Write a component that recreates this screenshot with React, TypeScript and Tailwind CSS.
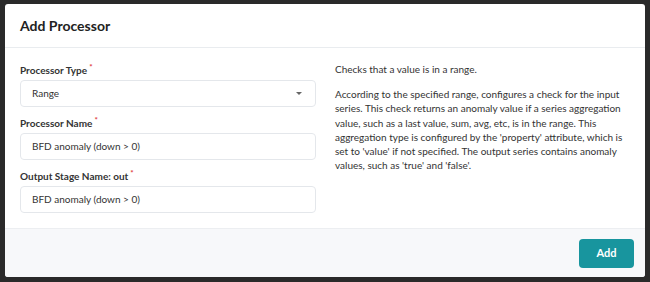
export default function App() {
  return (
    <div className="h-[282px] w-[650px] bg-[#2a2a2a] pt-[4px] pl-[5px] pr-[5px] pb-[5px]" style={{ fontFamily: "Lato, 'Liberation Sans', sans-serif" }}>
      <div className="flex h-full flex-col overflow-hidden rounded-[3px] bg-white text-[#333]">
        <div className="flex h-[44px] shrink-0 items-center border-b border-[#e9ecef] px-[15px]">
          <h2 className="text-[14px] font-bold text-[#222]">Add Processor</h2>
        </div>
        <div className="flex flex-1 gap-[19px] px-[15px] pt-[14px]">
          <div className="w-[296px] shrink-0">
            <Label text="Processor Type" />
            <div className="mt-[2px] mb-[8px] flex h-[27px] items-center justify-between rounded-[4px] border border-[#e4e7eb] pl-[11px] pr-[13px] text-[10px]">
              <span>Range</span>
              <svg width="6" height="3" viewBox="0 0 6 3"><path d="M0 0h6L3 3z" fill="#666" /></svg>
            </div>
            <Label text="Processor Name" />
            <Input value="BFD anomaly (down > 0)" />
            <Label text="Output Stage Name: out" />
            <Input value="BFD anomaly (down > 0)" />
          </div>
          <div className="w-[296px] text-[10px] leading-[14.2px]">
            <p>Checks that a value is in a range.</p>
            <p className="mt-[11px]">
              According to the specified range, configures a check for the input series. This check returns an anomaly value if a series aggregation value, such as a last value, sum, avg, etc, is in the range. This aggregation type is configured by the 'property' attribute, which is set to 'value' if not specified. The output series contains anomaly values, such as 'true' and 'false'.
            </p>
          </div>
        </div>
        <div className="flex h-[49px] shrink-0 items-start justify-end border-t border-[#eceef1] bg-[#f7f8fa] pt-[10px] pr-[11px]">
          <button className="h-[29px] w-[55px] rounded-[4px] bg-[#18959e] text-[11px] font-bold text-white">Add</button>
        </div>
      </div>
    </div>
  );
}

function Label({ text }: { text: string }) {
  return (
    <div className="flex h-[16px] items-center text-[10px] font-bold text-[#333]">
      {text}
      <span className="ml-[2px] -mt-[6px] text-[8px] text-[#e0393e]">*</span>
    </div>
  );
}

function Input({ value }: { value: string }) {
  return (
    <div className="mt-[2px] mb-[8px] flex h-[27px] items-center rounded-[4px] border border-[#e4e7eb] px-[11px] text-[10px]">
      {value}
    </div>
  );
}
